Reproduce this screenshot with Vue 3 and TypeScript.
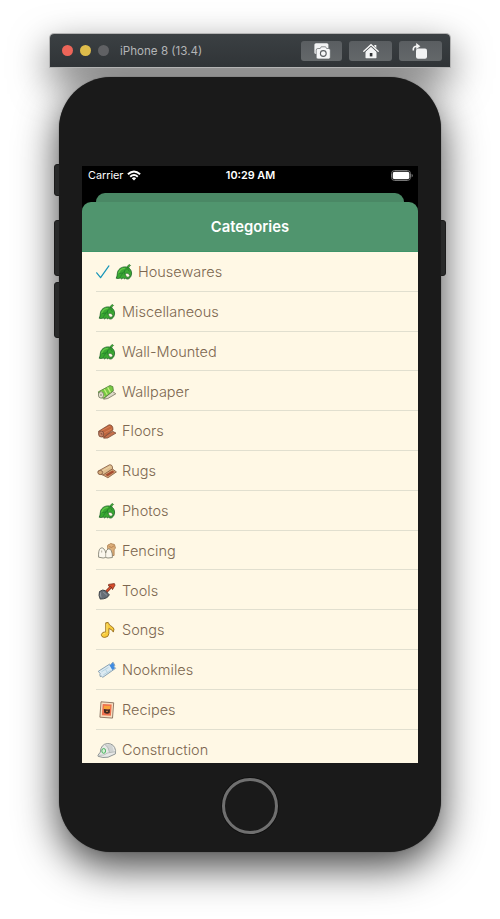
<script setup lang="ts">
type IconName = 'leaf' | 'wallpaper' | 'floor' | 'rug' | 'fence' | 'shovel' | 'note' | 'ticket' | 'recipe' | 'helmet'

interface Category {
  label: string
  icon: IconName
  selected?: boolean
}

const categories: Category[] = [
  { label: 'Housewares', icon: 'leaf', selected: true },
  { label: 'Miscellaneous', icon: 'leaf' },
  { label: 'Wall-Mounted', icon: 'leaf' },
  { label: 'Wallpaper', icon: 'wallpaper' },
  { label: 'Floors', icon: 'floor' },
  { label: 'Rugs', icon: 'rug' },
  { label: 'Photos', icon: 'leaf' },
  { label: 'Fencing', icon: 'fence' },
  { label: 'Tools', icon: 'shovel' },
  { label: 'Songs', icon: 'note' },
  { label: 'Nookmiles', icon: 'ticket' },
  { label: 'Recipes', icon: 'recipe' },
  { label: 'Construction', icon: 'helmet' },
]
</script>

<template>
  <main class="stage">
    <header class="toolbar">
      <span class="light red"></span>
      <span class="light yellow"></span>
      <span class="light gray"></span>
      <span class="device-name">iPhone 8 (13.4)</span>
      <button class="tool w41" aria-label="Screenshot">
        <svg width="18" height="18" viewBox="0 0 18 18">
          <rect x="1.400" y="1.200" width="14" height="10.800" rx="1.600" fill="#f1f2f3" />
          <path d="M4.900 6.500h2.300l1-1.700h4.400l1 1.700h2.100q1.600 0 1.600 1.600v7.200q0 1.700-1.600 1.700H4.900q-1.700 0-1.700-1.700V8.100q0-1.600 1.700-1.600z" fill="#f6f7f8" stroke="#5f6366" stroke-width=".7" />
          <circle cx="10.300" cy="11.500" r="2.900" fill="none" stroke="#5b5f63" stroke-width="1.100" />
        </svg>
      </button>
      <button class="tool w43" aria-label="Home">
        <svg width="18" height="18" viewBox="0 0 18 18">
          <path d="M12.300 3h2v4h-2z" fill="#f4f5f6" />
          <path d="M3.500 9.500 9 4.500l5.500 5v6.100q0 .6-.6.6H4.100q-.6 0-.6-.6z" fill="#f4f5f6" />
          <path d="M1.800 9.500 9 3l7.200 6.500" fill="none" stroke="#55595c" stroke-width="2.400" />
          <path d="M1.800 9.200 9 2.700l7.200 6.500" fill="none" stroke="#f8f8f8" stroke-width="1.400" stroke-linecap="round" />
          <rect x="7.800" y="11" width="2.600" height="3.400" fill="#303336" />
        </svg>
      </button>
      <button class="tool w43" aria-label="Rotate">
        <svg width="18" height="18" viewBox="0 0 18 18">
          <rect x="5" y="6.500" width="11" height="10.300" rx="2" fill="#f1f2f3" />
          <path d="M2.300 8.500Q1.900 4.200 6 4.200" fill="none" stroke="#f5f5f5" stroke-width="1.600" />
          <path d="m5.200 1 4.200 3.200-4.200 2.900z" fill="#f5f5f5" />
        </svg>
      </button>
    </header>

    <section class="phone">
      <i class="side mute"></i>
      <i class="side up"></i>
      <i class="side down"></i>
      <i class="side power"></i>

      <div class="screen">
        <div class="status">
          <div class="carrier">
            <span>Carrier</span>
            <svg width="14" height="11" viewBox="0 0 14 11">
              <g fill="none" stroke="#fff" stroke-width="1.900">
                <path d="M.9 4.300Q7-1.400 13.100 4.300" />
                <path d="M3.200 6.700Q7 3.200 10.800 6.700" />
              </g>
              <path d="M4.800 8.200Q7 6.400 9.200 8.200L7 10.600z" fill="#fff" />
            </svg>
          </div>
          <span class="clock">10:29 AM</span>
          <svg class="battery" width="22" height="12" viewBox="0 0 22 12">
            <rect x=".5" y=".5" width="19" height="10" rx="3.200" fill="none" stroke="#777" />
            <rect x="1.700" y="1.700" width="16.700" height="7.600" rx="2" fill="#fff" />
            <path d="M20.600 3.700q1.200.5 1.200 1.900t-1.200 1.900z" fill="#777" />
          </svg>
        </div>
        <div class="back-card"></div>
        <div class="sheet">
          <h1 class="title">Categories</h1>
          <ul class="list">
            <li v-for="c in categories" :key="c.label" class="row" :class="{ selected: c.selected }">
              <svg v-if="c.selected" class="check" width="14" height="14" viewBox="0 0 14 14">
                <path d="M.7 7.800 4.600 12.700 12.900.9" fill="none" stroke="#1695b8" stroke-width="1.200" stroke-linecap="round" stroke-linejoin="round" />
              </svg>
              <svg class="icon" width="20" height="20" viewBox="0 0 20 20">
                <g v-if="c.icon === 'leaf'" stroke-linejoin="round">
                  <path d="M2.200 16.200Q3.300 14 3.300 11.800C3.500 7.300 7.500 4.600 11.800 4.900Q14.200 5 15.800 6.800C18.100 9.300 18 12.600 16.400 15.200Q15 17.300 12.600 17.100L11.800 16 10.400 17 9.300 15.800 7.400 16.900 6.200 15.900Q4.400 16.900 2.200 16.200Z" fill="#3aa832" stroke="#1a6126" stroke-width=".8" />
                  <path d="M13 5.300Q13.600 3 15.600 2.500L16.600 3.500Q15 4.200 14.700 6Z" fill="#46ad35" stroke="#1d6527" stroke-width=".6" />
                  <path d="M4.800 10.800Q6.200 7 10.300 6.400" fill="none" stroke="#63c64a" stroke-width="1.300" stroke-linecap="round" />
                  <path d="M13.500 6Q9 9.500 6.400 14.700M10.500 8.600 10.200 12.500M8.500 11 5.300 11.500M13.300 6.600 15.400 9.500" fill="none" stroke="#1f7a2a" stroke-width=".7" />
                  <path d="M11.200 12.200Q12.500 10.700 14.200 11.400L15.800 13.400 14.500 15.300 12.500 14.900Z" fill="#fff8e5" stroke="#1d5527" stroke-width=".6" />
                </g>
                <g v-else-if="c.icon === 'wallpaper'" stroke-linejoin="round">
                  <path d="m7.600 15.800 8-6.300 3.200 2.300-8 4.700-4.100.7z" fill="#ddd9c7" stroke="#77725f" stroke-width=".8" />
                  <path d="M1.400 9.800 13 3.500l2.800 1.100.6 4.100L6.500 16.300 2.300 15z" fill="#77c943" stroke="#527e38" stroke-width=".8" />
                  <path d="m4.100 9 3.200 5.900m0-7.600 3 5.300m.3-7.200 2.900 5" stroke="#c9ed83" stroke-width="1.200" />
                  <ellipse cx="4" cy="12.900" rx="2.500" ry="3.200" fill="#eee9d8" stroke="#70705d" stroke-width=".8" />
                  <ellipse cx="4" cy="12.900" rx="1" ry="1.400" fill="#aaa795" />
                </g>
                <g v-else-if="c.icon === 'floor'" stroke="#704231" stroke-width=".7" stroke-linejoin="round">
                  <path d="m7.500 15.600 8.200-5.300 3.300 1.800-8.300 4.900-4 .2z" fill="#c6724d" />
                  <path d="M1.500 10.300 12 3.800q4.100-.2 4 5.100L6.800 16.300 2.500 15z" fill="#c1673f" />
                  <path d="m3.600 10 9.800-4.900M7 12l8-4.300" stroke="#df8d62" />
                  <ellipse cx="4.200" cy="13" rx="2.600" ry="3" fill="#c98567" />
                  <path d="M3.500 12.200q2-.2 1.400 1.900" fill="none" />
                </g>
                <g v-else-if="c.icon === 'rug'" stroke="#81583e" stroke-width=".8" stroke-linejoin="round">
                  <path d="m5.200 13.600 9.900-5.900 4.300 3.200-8.500 5.900z" fill="#d2a273" />
                  <path d="m8.300 13.800 7.200-4.200 1.900 1.400-6.700 4.300z" fill="#a74d32" stroke="none" />
                  <path d="m1 10.200 11.500-6.400q3.400-.3 3 4L6 14 1.600 12.700z" fill="#dfbe90" />
                  <path d="m5 10 8.300-4.500" stroke="#f0d8a8" />
                  <ellipse cx="3.300" cy="11.500" rx="2.400" ry="2.100" fill="#d6ad7c" />
                </g>
                <g v-else-if="c.icon === 'fence'" stroke-linejoin="round">
                  <path d="M10.500 6.500q-.5-3 2-3.200 1-1.500 2.700-.4 3-.2 2.900 2.700 1.100 2-1 3v5.800l-5 1z" fill="#dcae79" stroke="#a77a4b" stroke-width=".8" />
                  <path d="M12.200 5.600q2.500 2 4.700-.7" fill="none" stroke="#b98250" />
                  <path d="M1.600 16.200Q1.200 9.500 3.200 7.500 5.100 5.700 7 8q1.600 1.900 1.700 4 .5-3.200 2.500-4.100 2-.5 3.200 2 1.200 2.700 1 6.600l-4.400.5-2.300-.5-2.500.5z" fill="#fbf8ee" stroke="#77776a" stroke-width=".8" />
                  <path d="M8.700 11.500v5M4.700 9.500v2" fill="none" stroke="#a09c8c" stroke-width=".8" />
                </g>
                <g v-else-if="c.icon === 'shovel'">
                  <path d="m8.800 11.300 5.800-6" stroke="#722919" stroke-width="2.700" />
                  <path d="m9 11 5.800-6" stroke="#dc5330" stroke-width="1.500" />
                  <path d="m11.600 3.400 5.800-.8.600 1.600-2.500 4.400-1.300-2.700-2.600-.9z" fill="#d94d2c" stroke="#762d1d" stroke-width=".8" stroke-linejoin="round" />
                  <path d="M2.500 10.500Q6 7.900 8.300 9.700L12.300 13.800Q10.500 18 3.200 18.100 1.200 14.500 2.500 10.500Z" fill="#666d76" stroke="#343a40" stroke-width=".9" />
                  <path d="M3.700 11.400Q3.100 14 4.100 16.500M6.100 10.900 9.900 14.200" fill="none" stroke="#9199a1" stroke-width="1" />
                </g>
                <g v-else-if="c.icon === 'note'" stroke="#8d6212" stroke-width=".8" stroke-linejoin="round">
                  <path d="m8.700 2.800 2.500-.4q.5 2.900 4.400 4.700 2.500 1.500.7 5-.9-2.600-4.400-3.600v5.100q-.3 3.800-4.100 3.800-3.700-.1-3.400-3 .7-2.700 4.300-2.500z" fill="#f8cb3d" />
                  <path d="M9.900 4v8M5.900 14.500q.6-1.400 2.300-1.400" fill="none" stroke="#ffed86" />
                </g>
                <g v-else-if="c.icon === 'ticket'" stroke-linejoin="round">
                  <path d="M1.300 11.300 12.500 4.200l.9.6 2.700-2.600 1.700 3-.7 1.500 1.500 1.600L5.800 17.300l-1.200-1-1.300.3-.5-1.900.3-1.200z" fill="#dceaf2" stroke="#708ea5" stroke-width=".8" />
                  <path d="m12.200 4.800 1.200.3 2.600-2.500 1.400 2.800-.7 1.400 1.300 1.500-2.700 1.700z" fill="#408be0" />
                  <path d="m4.300 11.900 7.200-4.500M6.200 15l7.500-4.600m-5-.8 1.600 2.900" stroke="#a5c8d9" stroke-width=".7" />
                </g>
                <g v-else-if="c.icon === 'recipe'">
                  <path d="m4 1.800 12.700 1-1.200 15.300-12.600-.9z" fill="#f8dfc0" stroke="#77604f" stroke-width=".8" />
                  <path d="m5.700 4 9 .6-.8 11.200-9-.6z" fill="#ed704e" />
                  <path d="m7 5.700 6.300.4-.3 3H6.700z" fill="#f9a43b" />
                  <path d="M6.800 9q3.100.8 6.200.2l-.3 3.800q-2.700 1.700-5.500-.3z" fill="#42291f" />
                  <path d="m9 11.400 2-.1" stroke="#d68446" />
                </g>
                <g v-else stroke-linejoin="round">
                  <path d="M1 15.200 3.300 12.200Q3.800 4 10.600 3.500q6.800.1 8 7.100l-.2 3.300-7.300 3.300-5.200.3-4.800-1.200z" fill="#e7e8e6" stroke="#858b8b" stroke-width=".9" />
                  <path d="m8.700 4.300 6.400.9 1.800 6.400-4.300 1.100z" fill="#d0d3d2" />
                  <path d="M8 4.700q3.900 2 4.600 8M1.300 15.400q6 .5 9.500-2.500l7.800-1.200" fill="none" stroke="#afb4b2" stroke-width=".8" />
                  <ellipse cx="6.700" cy="10.900" rx="1.900" ry="2.400" fill="#d9eed7" stroke="#38ae50" stroke-width=".9" />
                </g>
              </svg>
              <span class="label">{{ c.label }}</span>
            </li>
          </ul>
        </div>
      </div>
      <div class="home-button"></div>
    </section>
  </main>
</template>

<style>
body { margin: 0; background: #fff; }
</style>

<style scoped>
* { box-sizing: border-box; }
.stage {
  width: 500px;
  height: 919px;
  padding-top: 34px;
  overflow: hidden;
  display: flex;
  flex-direction: column;
  align-items: center;
  gap: 10px;
  font-family: Inter, "Liberation Sans", sans-serif;
  background: #fff;
}
.toolbar, .phone { flex-shrink: 0; }
.toolbar {
  width: 400px;
  height: 33px;
  padding: 0 8px 0 12px;
  display: flex;
  align-items: center;
  background: linear-gradient(#3b4043, #303437);
  border-radius: 4px 4px 0 0;
  box-shadow: 0 0 0 1px #b4b4b4, 0 14px 38px rgba(0, 0, 0, .6);
  position: relative;
}
.light { width: 11px; height: 11px; border-radius: 50%; margin-right: 7px; }
.red { background: #ed6559; }
.yellow { background: #dfbd4b; }
.gray { background: #606164; }
.device-name { margin-left: 4px; color: #b3b5b7; font-size: 11.600px; line-height: 14px; margin-right: auto; white-space: nowrap; }
.tool {
  height: 20px;
  padding: 0;
  border: 0;
  border-radius: 3px;
  background: linear-gradient(#5a5e61, #64686a);
  display: flex;
  align-items: center;
  justify-content: center;
  margin-left: 7px;
}
.w41 { width: 41px; }
.w43 { width: 43px; }
.tool:last-child { padding-right: 2px; }
.phone {
  position: relative;
  width: 382px;
  height: 775px;
  padding-top: 89px;
  display: flex;
  flex-direction: column;
  align-items: center;
  background: #1a1a1a;
  border-radius: 52px;
  box-shadow: 0 0 1px #333, 0 14px 42px rgba(0, 0, 0, .76);
  clip-path: inset(-9px -60px -70px -60px);
}
.side { position: absolute; width: 6px; background: #292a2a; border: 1px solid #1c1c1c; }
.mute, .up, .down { left: -5px; border-radius: 3px 0 0 3px; }
.mute { top: 87px; height: 32px; }
.up { top: 143px; height: 56px; }
.down { top: 205px; height: 56px; }
.power { right: -5px; top: 143px; height: 56px; border-radius: 0 3px 3px 0; }
.screen { width: 336px; height: 597px; background: #000; overflow: hidden; display: flex; flex-direction: column; align-items: center; flex-shrink: 0; }
.status {
  width: 100%;
  height: 27px;
  flex-shrink: 0;
  padding: 0 5px 0 6px;
  display: grid;
  grid-template-columns: 1fr auto 1fr;
  align-items: start;
  color: #fff;
  font-size: 10.800px;
  line-height: 19px;
}
.carrier { display: flex; gap: 4px; }
.carrier svg { margin-top: 4px; }
.clock { font-weight: 600; }
.battery { justify-self: end; margin-top: 4px; }
.back-card { width: 308px; height: 18px; margin-bottom: -9px; flex-shrink: 0; border-radius: 9px 9px 0 0; background: #4a8865; }
.sheet { width: 100%; flex: 1; min-height: 0; overflow: hidden; border-radius: 9px 9px 0 0; }
.title { margin: 0; height: 50px; background: #50956e; border-bottom: 1px solid #3e9469; color: #fff; font-size: 14.800px; font-weight: 600; line-height: 51px; text-align: center; }
.list { margin: 0; padding: 0 0 0 14px; list-style: none; background: #fff8e5; }
.row { height: 39.800px; padding-top: 1.600px; display: flex; align-items: center; border-bottom: 1px solid #e1dfcf; }
.icon { margin-left: 1px; flex-shrink: 0; }
.label { margin-left: 5px; font-size: 14.500px; font-weight: 300; color: #7c6750; line-height: 20px; }
.check { flex-shrink: 0; }
.selected .icon { margin-left: 4px; }
.selected .label { margin-left: 4px; }
.home-button { width: 56px; height: 56px; margin-top: 15px; flex-shrink: 0; border: 3px solid #707070; border-radius: 50%; box-shadow: 0 0 0 1px #111; }
</style>
